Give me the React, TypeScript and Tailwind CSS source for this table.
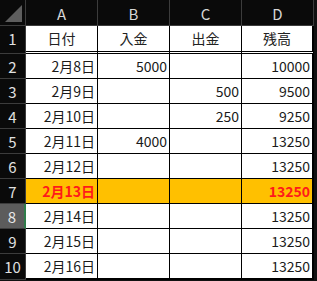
import React from 'react'

type Row = {
  n: number
  a: string
  b?: string
  c?: string
  d: string
  hi?: boolean
  sel?: boolean
}

const rows: Row[] = [
  { n: 2, a: '2月8日', b: '5000', d: '10000' },
  { n: 3, a: '2月9日', c: '500', d: '9500' },
  { n: 4, a: '2月10日', c: '250', d: '9250' },
  { n: 5, a: '2月11日', b: '4000', d: '13250' },
  { n: 6, a: '2月12日', d: '13250' },
  { n: 7, a: '2月13日', d: '13250', hi: true },
  { n: 8, a: '2月14日', d: '13250', sel: true },
  { n: 9, a: '2月15日', d: '13250' },
  { n: 10, a: '2月16日', d: '13250' },
]

const font = { fontFamily: '"Noto Sans CJK JP", "Noto Sans", sans-serif' }

const App = () => {
  return (
    <div
      className="h-[281px] w-[317px] overflow-hidden bg-[#111111] text-[14px] leading-none"
      style={font}
    >
      {/* column headers */}
      <div className="flex h-[26px]">
        <div className="relative h-[26px] w-[26px] border-b border-r border-[#3c3c3c] bg-[#0a0a0a]">
          <svg className="absolute left-[5px] top-[5px]" width="17" height="17" viewBox="0 0 17 17">
            <polygon points="17,0 17,17 0,17" fill="#5e5e5e" />
          </svg>
        </div>
        {['A', 'B', 'C', 'D'].map((c) => (
          <div
            key={c}
            className="flex h-[26px] w-[72px] items-center justify-center border-b border-r border-[#3c3c3c] bg-[#0a0a0a] pt-[2px] text-[15px] text-[#d6d6d6]"
          >
            {c}
          </div>
        ))}
      </div>

      {/* row 1 */}
      <div className="flex h-[28px]">
        <div className="flex h-[28px] w-[26px] items-center justify-center border-b border-r border-[#3c3c3c] bg-[#0a0a0a] pb-[2px] text-[15px] text-[#e0e0e0]">
          1
        </div>
        {['日付', '入金', '出金', '残高'].map((t, i) => (
          <div
            key={t}
            className={`flex h-[28px] w-[72px] items-center justify-center border-b-[3px] border-double border-b-black bg-white pb-[1px] text-[#222] ${
              i === 3 ? 'border-r-2 border-r-black' : 'border-r border-r-black'
            }`}
          >
            {t}
          </div>
        ))}
      </div>

      {rows.map((r, idx) => {
        const last = idx === rows.length - 1
        const h = last ? 'h-[26px] border-b-2' : 'h-[25px] border-b'
        const cell = r.hi
          ? 'bg-[#ffc000] font-bold text-[#ff1a1a]'
          : 'bg-white text-[#1a1a1a]'
        return (
          <div key={r.n} className="flex">
            <div
              className={`flex w-[26px] items-center justify-center border-b border-[#3c3c3c] text-[15px] ${
                last ? 'h-[26px]' : 'h-[25px]'
              } ${
                r.sel
                  ? 'border-r-2 border-r-[#2e7d4a] bg-[#5c5c5c] text-[#e8e8e8]'
                  : 'border-r border-r-[#3c3c3c] bg-[#0a0a0a] text-[#e0e0e0]'
              }`}
            >
              {r.n}
            </div>
            {[r.a, r.b, r.c, r.d].map((v, i) => (
              <div
                key={i}
                className={`flex w-[72px] items-center justify-end border-b-black pr-[2px] ${h} ${cell} ${
                  i === 3 ? 'border-r-2 border-r-black' : 'border-r border-r-black'
                }`}
              >
                {v ?? ''}
              </div>
            ))}
          </div>
        )
      })}
    </div>
  )
}

export default App
